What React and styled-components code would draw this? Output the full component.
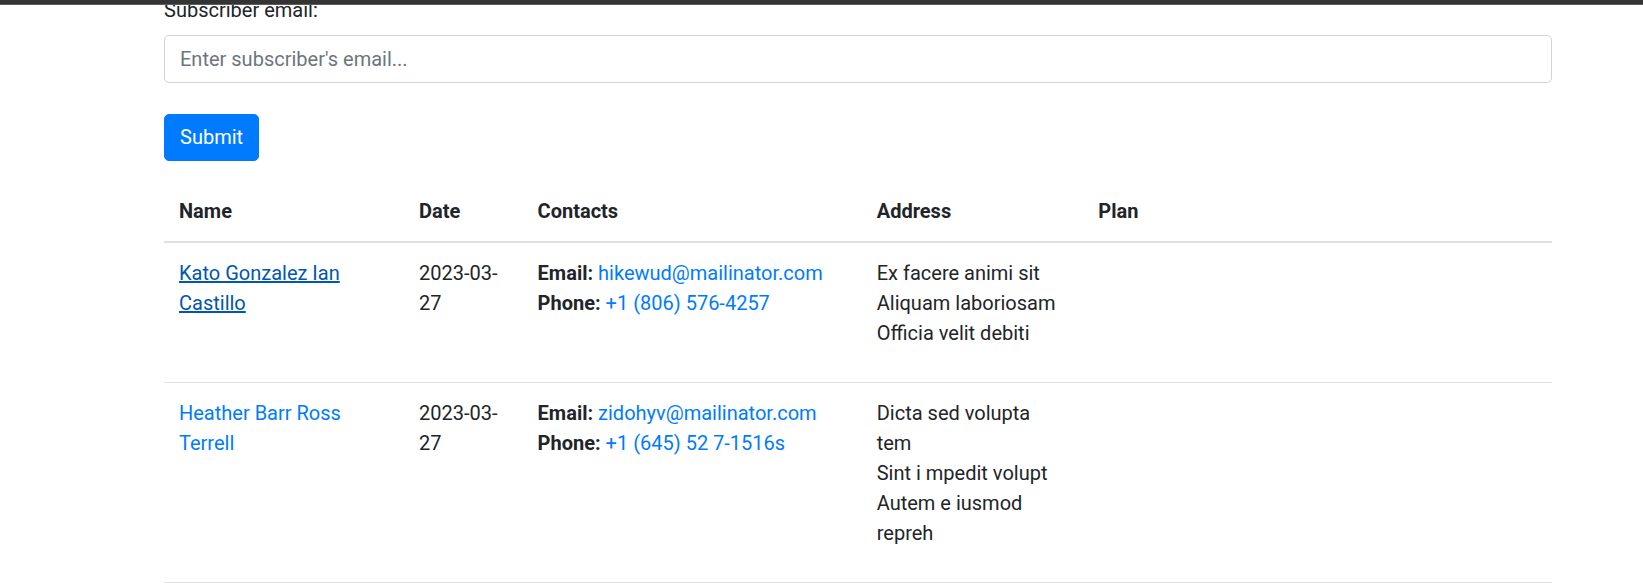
import React from 'react';
import styled, { createGlobalStyle } from 'styled-components';

const subscribers = [
  {
    name: 'Kato Gonzalez Ian Castillo',
    visited: true,
    date: '2023-03-27',
    email: 'hikewud@mailinator.com',
    phone: '+1 (806) 576-4257',
    address: ['Ex facere animi sit', 'Aliquam laboriosam', 'Officia velit debiti'],
  },
  {
    name: 'Heather Barr Ross Terrell',
    visited: false,
    date: '2023-03-27',
    email: 'zidohyv@mailinator.com',
    phone: '+1 (645) 52 7-1516s',
    address: ['Dicta sed volupta', 'tem', 'Sint i mpedit volupt', 'Autem e iusmod', 'repreh'],
  },
];

const columns = [
  { label: 'Name', width: 240 },
  { label: 'Date', width: 118.5 },
  { label: 'Contacts', width: 339 },
  { label: 'Address', width: 221.5 },
  { label: 'Plan', width: 468 },
];

export default function App() {
  return (
    <>
      <GlobalStyle />
      <TopBar />
      <Page>
        <Form onSubmit={(e) => e.preventDefault()}>
          <FormGroup>
            <Label htmlFor="email">Subscriber email:</Label>
            <Input id="email" type="email" placeholder="Enter subscriber's email..." />
          </FormGroup>
          <SubmitButton type="submit">Submit</SubmitButton>
        </Form>
        <Table>
          <colgroup>
            {columns.map((c) => (
              <col key={c.label} style={{ width: c.width }} />
            ))}
          </colgroup>
          <thead>
            <tr>
              {columns.map((c) => (
                <Th key={c.label}>{c.label}</Th>
              ))}
            </tr>
          </thead>
          <tbody>
            {subscribers.map((s) => (
              <tr key={s.email}>
                <Td>
                  <NameLink href="#" $visited={s.visited}>
                    {s.name}
                  </NameLink>
                </Td>
                <Td>{s.date}</Td>
                <Td>
                  <div>
                    <strong>Email:</strong> <Link href="#">{s.email}</Link>
                  </div>
                  <div>
                    <strong>Phone:</strong> <Link href="#">{s.phone}</Link>
                  </div>
                </Td>
                <Td>
                  <Address>
                    {s.address.map((line, i) => (
                      <AddressLine key={i}>{line}</AddressLine>
                    ))}
                  </Address>
                </Td>
                <Td></Td>
              </tr>
            ))}
          </tbody>
        </Table>
      </Page>
    </>
  );
}

const GlobalStyle = createGlobalStyle`
  html, body {
    margin: 0;
    padding: 0;
    background: #ffffff;
    overflow: hidden;
  }
  body {
    font-family: 'Segoe UI', Roboto, 'Liberation Sans', sans-serif;
    font-size: 20px;
    line-height: 30px;
    color: #212529;
  }
  * {
    box-sizing: border-box;
  }
`;

const TopBar = styled.div`
  position: fixed;
  top: 0;
  left: 0;
  right: 0;
  height: 5px;
  background: #343434;
  border-bottom: 1px solid #5c5c5c;
  z-index: 10;
`;

const Page = styled.main`
  width: 1387.5px;
  margin-left: 164px;
  margin-top: -5px;
`;

const Form = styled.form`
  display: flex;
  flex-direction: column;
  align-items: flex-start;
`;

const FormGroup = styled.div`
  display: flex;
  flex-direction: column;
  width: 100%;
  margin-bottom: 31px;
`;

const Label = styled.label`
  margin-bottom: 10px;
`;

const Input = styled.input`
  height: 47.5px;
  width: 100%;
  padding: 7.5px 15px;
  font: inherit;
  color: #495057;
  border: 1.25px solid #ced4da;
  border-radius: 5px;
  background: #fff;
  outline: none;
  &::placeholder {
    color: #6c757d;
  }
`;

const SubmitButton = styled.button`
  height: 47.5px;
  padding: 7.5px 15px;
  font: inherit;
  color: #fff;
  background: #007bff;
  border: 1.25px solid #007bff;
  border-radius: 5px;
  cursor: pointer;
`;

const Table = styled.table`
  width: 100%;
  margin-top: 20px;
  border-collapse: collapse;
  table-layout: fixed;
`;

const Th = styled.th`
  text-align: left;
  font-weight: 700;
  padding: 15px;
  vertical-align: bottom;
  border-bottom: 2.5px solid #dee2e6;
`;

const Td = styled.td`
  padding: 15px;
  vertical-align: top;
  border-bottom: 1.25px solid #dee2e6;
  strong {
    font-weight: 700;
  }
`;

const Link = styled.a`
  color: #007bff;
  text-decoration: none;
`;

const NameLink = styled(Link)`
  color: ${(p) => (p.$visited ? '#0056b3' : '#007bff')};
  text-decoration: ${(p) => (p.$visited ? 'underline' : 'none')};
`;

const Address = styled.p`
  margin: 0 0 19px;
`;

const AddressLine = styled.span`
  display: block;
`;
